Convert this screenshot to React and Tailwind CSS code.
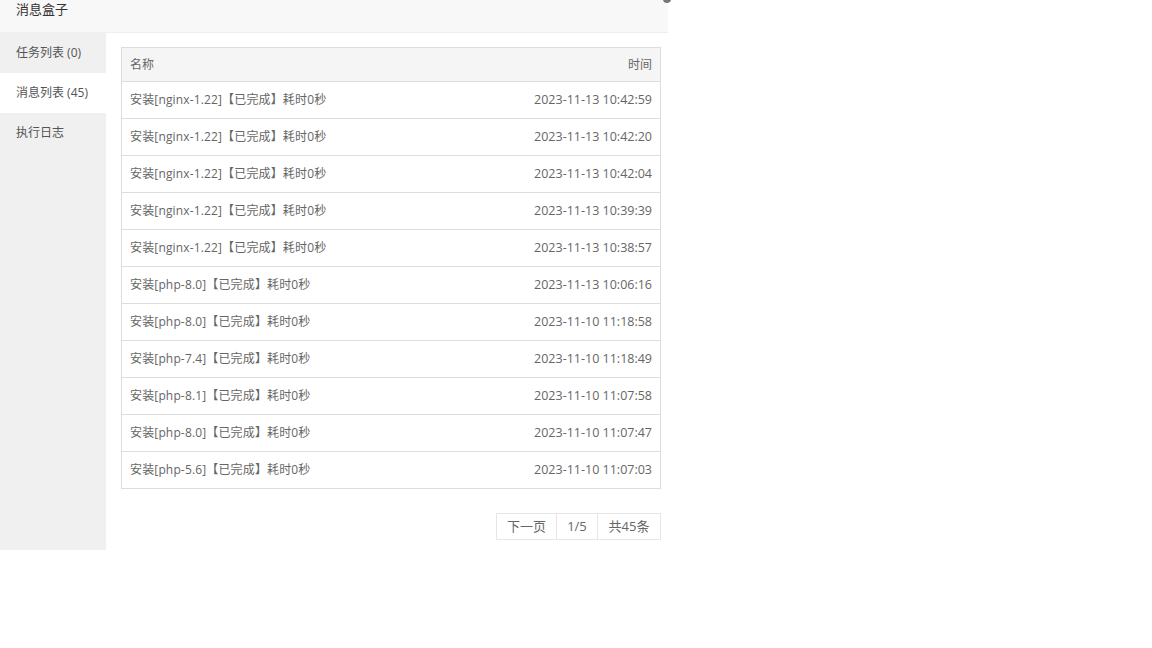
import React from "react";

const rows = [
  ["安装[nginx-1.22]【已完成】耗时0秒", "2023-11-13 10:42:59"],
  ["安装[nginx-1.22]【已完成】耗时0秒", "2023-11-13 10:42:20"],
  ["安装[nginx-1.22]【已完成】耗时0秒", "2023-11-13 10:42:04"],
  ["安装[nginx-1.22]【已完成】耗时0秒", "2023-11-13 10:39:39"],
  ["安装[nginx-1.22]【已完成】耗时0秒", "2023-11-13 10:38:57"],
  ["安装[php-8.0]【已完成】耗时0秒", "2023-11-13 10:06:16"],
  ["安装[php-8.0]【已完成】耗时0秒", "2023-11-10 11:18:58"],
  ["安装[php-7.4]【已完成】耗时0秒", "2023-11-10 11:18:49"],
  ["安装[php-8.1]【已完成】耗时0秒", "2023-11-10 11:07:58"],
  ["安装[php-8.0]【已完成】耗时0秒", "2023-11-10 11:07:47"],
  ["安装[php-5.6]【已完成】耗时0秒", "2023-11-10 11:07:03"],
];

const tabs = [
  { label: "任务列表 (0)", active: false },
  { label: "消息列表 (45)", active: true },
  { label: "执行日志", active: false },
];

function App() {
  return (
    <div
      className="relative w-[1152px] h-[648px] bg-white overflow-hidden text-[12px] text-[#666]"
      style={{ fontFamily: '"Open Sans", "Noto Sans CJK SC", sans-serif' }}
    >
      <div className="relative w-[668px] bg-white">
        {/* title bar */}
        <div className="h-[33px] bg-[#f8f8f8] border-b border-[#eee] pl-[16px] flex items-center">
          <span className="text-[13px] text-[#333] -mt-[12px]">消息盒子</span>
        </div>
        <div className="absolute -right-[3px] -top-[5px] w-[8px] h-[8px] rounded-full bg-[#777]"></div>

        <div className="flex h-[517px]">
          {/* sidebar */}
          <div className="w-[106px] bg-[#f0f0f0] flex flex-col">
            {tabs.map((t) => (
              <div
                key={t.label}
                className={
                  "h-[40px] pl-[16px] flex items-center text-[#555] " +
                  (t.active ? "bg-white" : "")
                }
              >
                {t.label}
              </div>
            ))}
          </div>

          {/* content */}
          <div className="flex-1 pt-[14px] pl-[15px] pr-[7px]">
            <div className="border-x border-t border-[#ddd]">
              <div className="h-[34px] bg-[#f5f5f5] flex items-center justify-between px-[8px] border-b border-[#ddd]">
                <span>名称</span>
                <span>时间</span>
              </div>
              {rows.map((r, i) => (
                <div
                  key={i}
                  className="h-[37px] flex items-center justify-between px-[8px] text-[#666] border-b border-[#ddd]"
                >
                  <span className="tracking-[0.15px]">{r[0]}</span>
                  <span className="text-[12.5px]">{r[1]}</span>
                </div>
              ))}
            </div>

            <div className="flex justify-end mt-[24px]">
              <div className="flex h-[27px] border border-[#e6e6e6] text-[13px] text-[#666]">
                <div className="w-[60px] flex items-center justify-center border-r border-[#e6e6e6]">
                  下一页
                </div>
                <div className="w-[41px] flex items-center justify-center border-r border-[#e6e6e6]">
                  1/5
                </div>
                <div className="w-[62px] flex items-center justify-center">共45条</div>
              </div>
            </div>
          </div>
        </div>
      </div>
    </div>
  );
}

export default App;
